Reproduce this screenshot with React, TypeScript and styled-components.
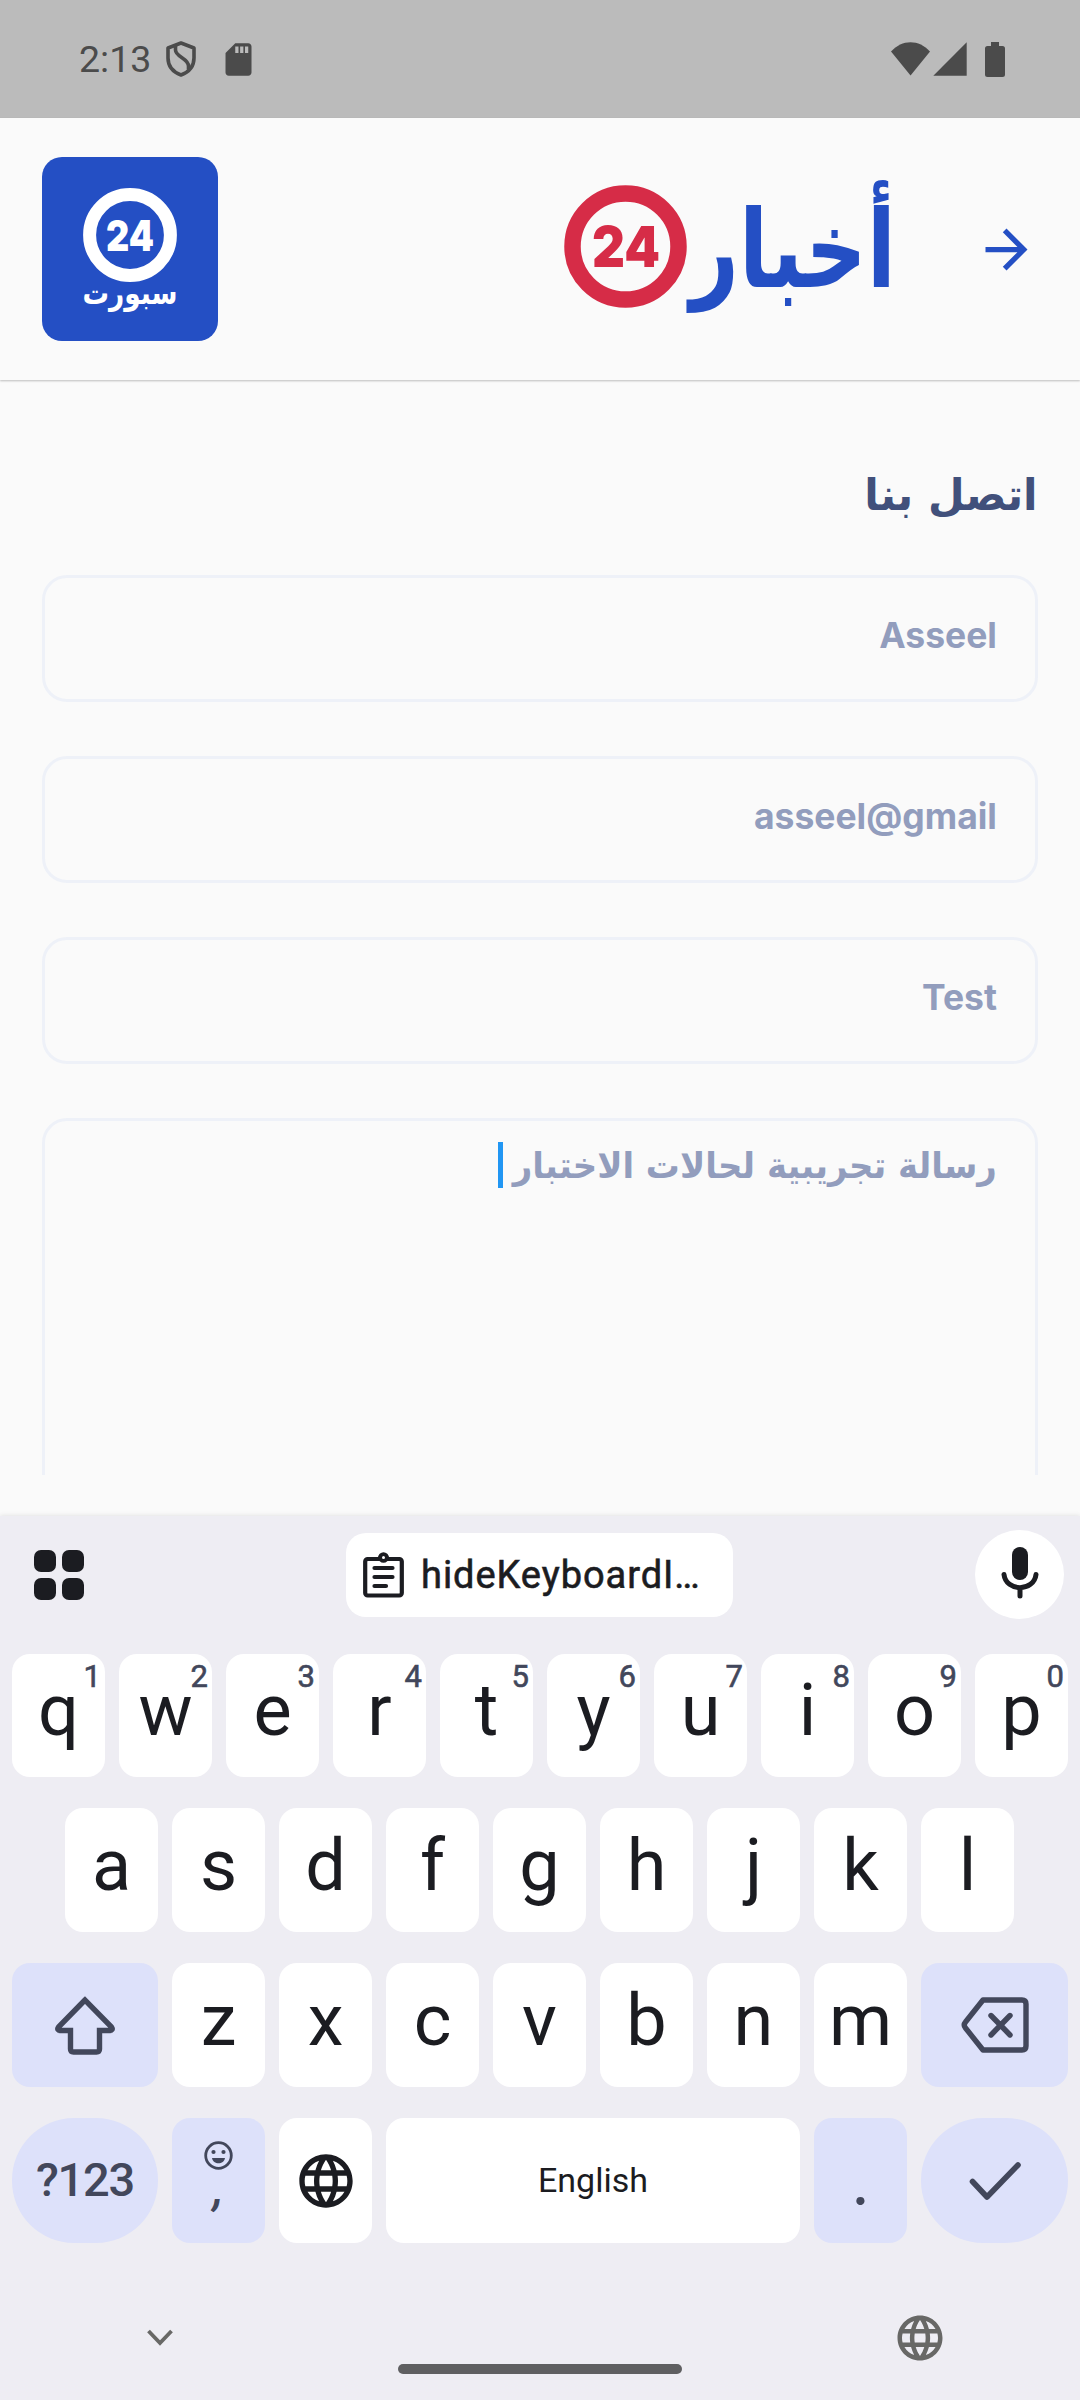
import React from "react";
import styled, { createGlobalStyle } from "styled-components";
import { MdArrowForward, MdLanguage, MdSdCard, MdSignalCellular4Bar } from "react-icons/md";

const Global = createGlobalStyle`
  body { margin: 0; background: #fafafa; }
  *, *::before, *::after { box-sizing: border-box; }
  svg { display: block; flex: none; }
`;

const arabic = `"DejaVu Sans", sans-serif`;
const latin = `Inter, "DejaVu Sans", sans-serif`;

const Screen = styled.div`
  width: 1080px;
  height: 2400px;
  display: flex;
  flex-direction: column;
  overflow: hidden;
  background: #fafafa;
  font-family: Roboto, sans-serif;
`;

const StatusBar = styled.header`
  height: 118px;
  flex: none;
  display: flex;
  align-items: center;
  justify-content: space-between;
  padding: 0 75px 0 79px;
  background: #bbbbbb;
  color: #4b4b4b;
`;
const StatusGroup = styled.div<{ $gap: number }>`
  display: flex;
  align-items: center;
  gap: ${(p) => p.$gap}px;
`;
const Clock = styled.span`
  font-size: 37.5px;
  line-height: 44px;
  width: 73px;
`;
const SdCard = styled(MdSdCard)`
  margin-left: 9px;
`;

const AppBar = styled.div`
  height: 262px;
  flex: none;
  display: flex;
  align-items: center;
  justify-content: space-between;
  padding: 0 42px;
  box-shadow: 0 1px 2px rgba(0, 0, 0, 0.25);
`;
const SportTile = styled.div`
  width: 176px;
  height: 184px;
  border-radius: 20px;
  background: #244fc4;
`;
const Brand = styled.div`
  display: flex;
  align-items: center;
  gap: 71px;
  color: #244fc4;
`;

const Form = styled.main`
  height: 1095px;
  flex: none;
  display: flex;
  flex-direction: column;
  padding: 80px 42px 0;
  direction: rtl;
  overflow: hidden;
`;
const Title = styled.h1`
  margin: 0;
  height: 115px;
  flex: none;
  font: 700 44px/70px ${arabic};
  color: #41507b;
`;
const Stretch = styled.span<{ $x: number }>`
  display: inline-block;
  white-space: nowrap;
  transform: scaleX(${(p) => p.$x});
  transform-origin: 100% 70%;
`;
const Field = styled.div`
  height: 127px;
  flex: none;
  margin-bottom: 54px;
  padding: 0 38px;
  border: 3px solid #eef1f8;
  border-radius: 25px;
  font: 700 35.5px/116px ${latin};
  color: #929dbd;
`;
const MessageField = styled(Field)`
  height: 420px;
  margin: 0;
  padding-top: 21px;
  display: flex;
  font: 700 36px/46px ${arabic};
`;
const MessageText = styled.div`
  width: 494px;
  padding-top: 1px;
`;
const Caret = styled.i`
  width: 5px;
  height: 46px;
  background: #2196f3;
`;

const Keyboard = styled.section`
  flex: 1;
  margin-top: 41px;
  display: flex;
  flex-direction: column;
  background: #eeedf3;
  box-shadow: 0 0 5px rgba(0, 0, 0, 0.12);
  color: #1b1c21;
`;
const Toolbar = styled.div`
  height: 117px;
  margin-bottom: 21px;
  display: flex;
  align-items: center;
  justify-content: space-between;
  padding: 0 16px 0 34px;
`;
const Apps = styled.div`
  display: grid;
  grid-template-columns: 22px 22px;
  gap: 6px;
  width: 89px;
`;
const AppDot = styled.i`
  height: 22px;
  border-radius: 7px;
  background: #1b1c21;
`;
const Chip = styled.div`
  width: 387px;
  height: 84px;
  margin-right: 19px;
  padding-left: 17px;
  display: flex;
  align-items: center;
  gap: 17px;
  border-radius: 20px;
  background: #fff;
  font-size: 38px;
  letter-spacing: 0.95px;
  -webkit-text-stroke: 0.6px currentColor;
`;
const MicButton = styled.div`
  width: 89px;
  height: 89px;
  border-radius: 50%;
  display: flex;
  align-items: center;
  justify-content: center;
  padding-bottom: 3px;
  background: #fff;
`;
const Row = styled.div<{ $inset?: number; $h?: number }>`
  height: ${(p) => p.$h ?? 124}px;
  margin-bottom: 31px;
  display: flex;
  gap: 14px;
  padding: 0 ${(p) => p.$inset ?? 12}px;
`;
const Key = styled.div<{ $w?: number; $tone?: "blue"; $round?: boolean; $size?: number; $lift?: number; $drop?: number; $weight?: number }>`
  position: relative;
  width: ${(p) => p.$w ?? 93}px;
  flex: none;
  display: flex;
  flex-direction: column;
  align-items: center;
  justify-content: center;
  padding-top: ${(p) => p.$drop ?? 0}px;
  padding-bottom: ${(p) => p.$lift ?? 0}px;
  border-radius: ${(p) => (p.$round ? 62 : 18)}px;
  background: ${(p) => (p.$tone ? "#dde1fa" : "#fff")};
  color: ${(p) => (p.$tone ? "#42475b" : "#1b1c21")};
  font-size: ${(p) => p.$size ?? 72}px;
  font-weight: ${(p) => p.$weight ?? 400};
  line-height: 1;
`;
const Hint = styled.sup`
  position: absolute;
  top: 6px;
  right: 4px;
  font-size: 31px;
  line-height: 34px;
  color: #42475b;
  -webkit-text-stroke: 0.6px currentColor;
`;
const SymbolsLabel = styled.span`
  letter-spacing: -1.2px;
  font-size: 47px;
`;
const Comma = styled.span`
  font-style: italic;
  line-height: 36px;
`;
const Period = styled.span`
  font-family: Lato, sans-serif;
`;
const NavBar = styled.footer`
  flex: 1;
  display: flex;
  justify-content: space-between;
  padding: 37px 133px 0 144px;
  color: #686866;
`;
const Handle = styled.i`
  width: 284px;
  height: 10px;
  margin: 53px 0 0 11px;
  border-radius: 5px;
  background: #5f5f61;
`;

const ShieldIcon = () => (
  <svg width="30" height="36" viewBox="0 0 30 36" fill="none" stroke="currentColor" strokeWidth="3.6" strokeLinejoin="round">
    <path d="M15 2 28 7v10c0 8-5 14-13 17C7 31 2 25 2 17V7z" />
    <path d="M9.500 5v4c0 7 13 8 13 16v3" />
  </svg>
);
const WifiIcon = () => (
  <svg width="39" height="34" viewBox="0 0 39 34" fill="currentColor">
    <path d="M0 9.500C11-3 28-3 39 9.500L19.500 33.500z" />
  </svg>
);
const BatteryIcon = () => (
  <svg width="35" height="35" viewBox="0 0 35 35" fill="currentColor">
    <path d="M21 0h8v4h3.500q2.500 0 2.500 2.500v26q0 2.500-2.500 2.500h-15q-2.500 0-2.500-2.500v-26q0-2.500 2.500-2.500H21z" />
  </svg>
);
const SportLogo = () => (
  <svg width="176" height="184" viewBox="0 0 176 184" fill="#fff">
    <circle cx="88" cy="78" r="40.400" fill="none" stroke="#fff" strokeWidth="13" />
    <text x="64" y="94" fontFamily="Inter" fontWeight="900" fontSize="43" textLength="48" lengthAdjust="spacingAndGlyphs">24</text>
    <text x="135.500" y="147" direction="rtl" fontFamily="DejaVu Sans" fontWeight="700" fontSize="32" textLength="95" lengthAdjust="spacingAndGlyphs">سبورت</text>
  </svg>
);
const NewsLogo = () => (
  <svg width="340" height="200" viewBox="0 -33 340 200">
    <circle cx="61.500" cy="64.500" r="53" fill="none" stroke="#d62c47" strokeWidth="16.500" />
    <text x="28" y="85" fontFamily="Inter" fontWeight="900" fontSize="57" fill="#d62c47" textLength="68" lengthAdjust="spacingAndGlyphs">24</text>
    <text x="332" y="104.500" direction="rtl" fontFamily="DejaVu Sans" fontWeight="700" fontSize="108" fill="#244fc4" textLength="206" lengthAdjust="spacingAndGlyphs">أخبار</text>
  </svg>
);
const ClipboardIcon = () => (
  <svg width="41" height="46" viewBox="0 0 41 46" fill="none" stroke="currentColor" strokeWidth="4.200" strokeLinecap="round">
    <rect x="2.200" y="7" width="36.600" height="36.500" rx="2.500" />
    <path d="M11.500 16h18M11.500 25h18M11.500 34h11.500" />
    <path d="M15 6.500a5.500 5.500 0 0 1 11 0v1.500H15z" fill="currentColor" stroke="none" />
    <circle cx="20.500" cy="5.500" r="3.400" fill="#fff" strokeWidth="3.800" />
  </svg>
);
const MicIcon = () => (
  <svg width="38" height="52" viewBox="0 0 38 52" fill="none" stroke="currentColor" strokeWidth="5" strokeLinecap="round">
    <rect x="11" y="0" width="16" height="33" rx="8" fill="currentColor" stroke="none" />
    <path d="M3 27.500c2 17.500 30 17.500 32 0M19 41v8" />
  </svg>
);
const ShiftIcon = () => (
  <svg width="60" height="60" viewBox="0 0 60 60" fill="none" stroke="currentColor" strokeWidth="5.400">
    <path d="M30 5 3.500 32c-1.500 2-.5 3.500 1.500 3.500h10.500V54q0 3 3 3h23q3 0 3-3V35.500H55c2 0 3-1.500 1.500-3.500z" />
  </svg>
);
const BackspaceIcon = () => (
  <svg width="68" height="56" viewBox="0 0 68 56" fill="none" stroke="currentColor" strokeWidth="5.400" strokeLinecap="round" strokeLinejoin="round">
    <path d="M22 3h39q4 0 4 4v42q0 4-4 4H22L4.500 31q-2.500-3 0-6z" />
    <path d="m30 18.500 19 19.500m0-19.500L30 38" />
  </svg>
);
const SmileIcon = () => (
  <svg width="29" height="29" viewBox="0 0 29 29" fill="currentColor">
    <circle cx="14.500" cy="14.500" r="12.800" fill="none" stroke="currentColor" strokeWidth="2.800" />
    <circle cx="9.500" cy="11" r="2.100" />
    <circle cx="19.500" cy="11" r="2.100" />
    <path d="M8 17h13c-1 7-12 7-13 0z" />
  </svg>
);
const CheckIcon = () => (
  <svg width="52" height="40" viewBox="0 0 52 40" fill="none" stroke="currentColor" strokeWidth="5.600" strokeLinecap="round" strokeLinejoin="round">
    <path d="m3.500 20.500 14.500 15.500L49 4" />
  </svg>
);
const ChevronIcon = () => (
  <svg width="32" height="50" viewBox="0 0 32 50" fill="none" stroke="currentColor" strokeWidth="3.800">
    <path d="m4.500 20 11.500 12 11.500-12" />
  </svg>
);

export default function App() {
  return (
    <>
      <Global />
      <Screen>
        <StatusBar>
          <StatusGroup $gap={14}>
            <Clock>2:13</Clock>
            <ShieldIcon />
            <SdCard size={39} />
          </StatusGroup>
          <StatusGroup $gap={0}>
            <WifiIcon />
            <MdSignalCellular4Bar size={40} />
            <BatteryIcon />
          </StatusGroup>
        </StatusBar>
        <AppBar>
          <SportTile><SportLogo /></SportTile>
          <Brand>
            <NewsLogo />
            <MdArrowForward size={63} />
          </Brand>
        </AppBar>
        <Form>
          <Title><Stretch $x={0.96}>اتصل بنا</Stretch></Title>
          <Field>Asseel</Field>
          <Field>asseel@gmail</Field>
          <Field>Test</Field>
          <MessageField>
            <MessageText><Stretch $x={0.942}>رسالة تجريبية لحالات الاختبار</Stretch></MessageText>
            <Caret />
          </MessageField>
        </Form>
        <Keyboard>
          <Toolbar>
            <Apps><AppDot /><AppDot /><AppDot /><AppDot /></Apps>
            <Chip><ClipboardIcon />hideKeyboardI…</Chip>
            <MicButton><MicIcon /></MicButton>
          </Toolbar>
          <Row $h={123}>
            {[..."qwertyuiop"].map((letter, i) => (
              <Key key={letter} $lift={9}>{letter}<Hint>{(i + 1) % 10}</Hint></Key>
            ))}
          </Row>
          <Row $inset={65}>
            {[..."asdfghjkl"].map((letter) => <Key key={letter} $lift={9}>{letter}</Key>)}
          </Row>
          <Row>
            <Key $w={146} $tone="blue"><ShiftIcon /></Key>
            {[..."zxcvbnm"].map((letter) => <Key key={letter} $lift={9}>{letter}</Key>)}
            <Key $w={147} $tone="blue"><BackspaceIcon /></Key>
          </Row>
          <Row $h={125}>
            <Key $w={146} $tone="blue" $round $weight={500} $lift={2}><SymbolsLabel>?123</SymbolsLabel></Key>
            <Key $tone="blue" $size={48} $weight={500} $lift={14}><SmileIcon /><Comma>,</Comma></Key>
            <Key><MdLanguage size={64} /></Key>
            <Key $w={414} $size={34} $lift={2}>English</Key>
            <Key $tone="blue" $size={54} $weight={700} $drop={9}><Period>.</Period></Key>
            <Key $w={147} $tone="blue" $round><CheckIcon /></Key>
          </Row>
          <NavBar>
            <ChevronIcon />
            <Handle />
            <MdLanguage size={54} />
          </NavBar>
        </Keyboard>
      </Screen>
    </>
  );
}
